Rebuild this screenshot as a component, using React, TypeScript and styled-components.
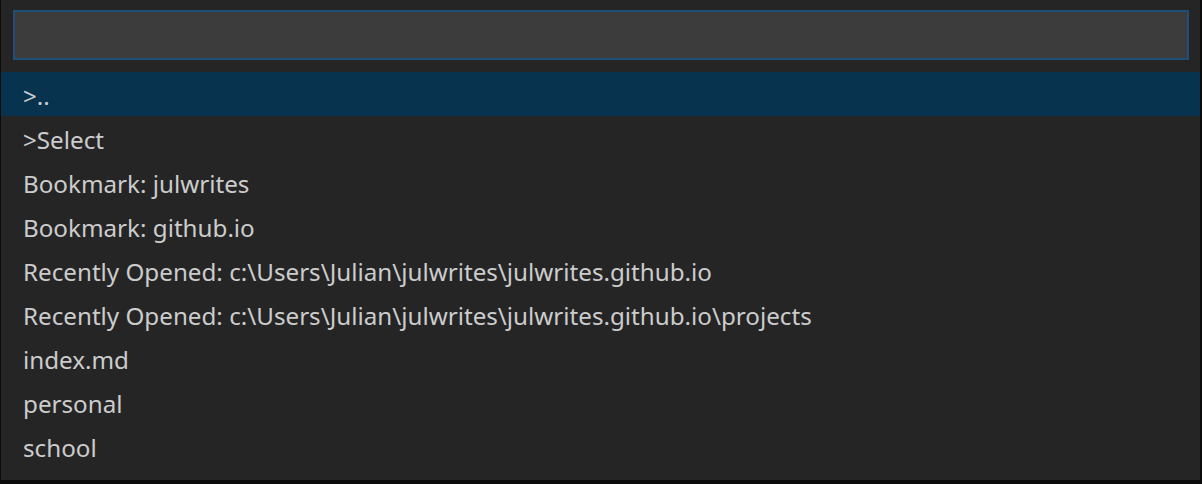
import React from 'react';
import styled, { createGlobalStyle } from 'styled-components';

const items = [
  '>..',
  '>Select',
  'Bookmark: julwrites',
  'Bookmark: github.io',
  'Recently Opened: c:\\Users\\Julian\\julwrites\\julwrites.github.io',
  'Recently Opened: c:\\Users\\Julian\\julwrites\\julwrites.github.io\\projects',
  'index.md',
  'personal',
  'school',
];

const GlobalStyle = createGlobalStyle`
  html, body {
    margin: 0;
    padding: 0;
    background: #000000;
  }
`;

const Frame = styled.div`
  width: 1202px;
  height: 484px;
  background: #0b0b0b;
`;

const Panel = styled.div`
  box-sizing: border-box;
  margin-left: 1px;
  width: 1199px;
  height: 480px;
  background: #252526;
  padding-top: 10px;
  font-family: 'Noto Sans', 'Open Sans', sans-serif;
  color: #cccccc;
`;

const InputBox = styled.div`
  box-sizing: border-box;
  margin-left: 12px;
  width: 1176px;
  height: 50px;
  background: #3c3c3c;
  border: 2px solid #1f4f78;
`;

const List = styled.ul`
  list-style: none;
  margin: 12px 0 0;
  padding: 0;
`;

const Row = styled.li<{ $active?: boolean }>`
  height: 44px;
  display: flex;
  align-items: center;
  padding-left: 22px;
  padding-top: 2px;
  box-sizing: border-box;
  font-size: 24.2px;
  white-space: nowrap;
  background: ${(p) => (p.$active ? '#07334f' : 'transparent')};
`;

export default function App() {
  return (
    <Frame>
      <GlobalStyle />
      <Panel>
        <InputBox />
        <List>
          {items.map((label, i) => (
            <Row key={label} $active={i === 0}>
              {label}
            </Row>
          ))}
        </List>
      </Panel>
    </Frame>
  );
}
